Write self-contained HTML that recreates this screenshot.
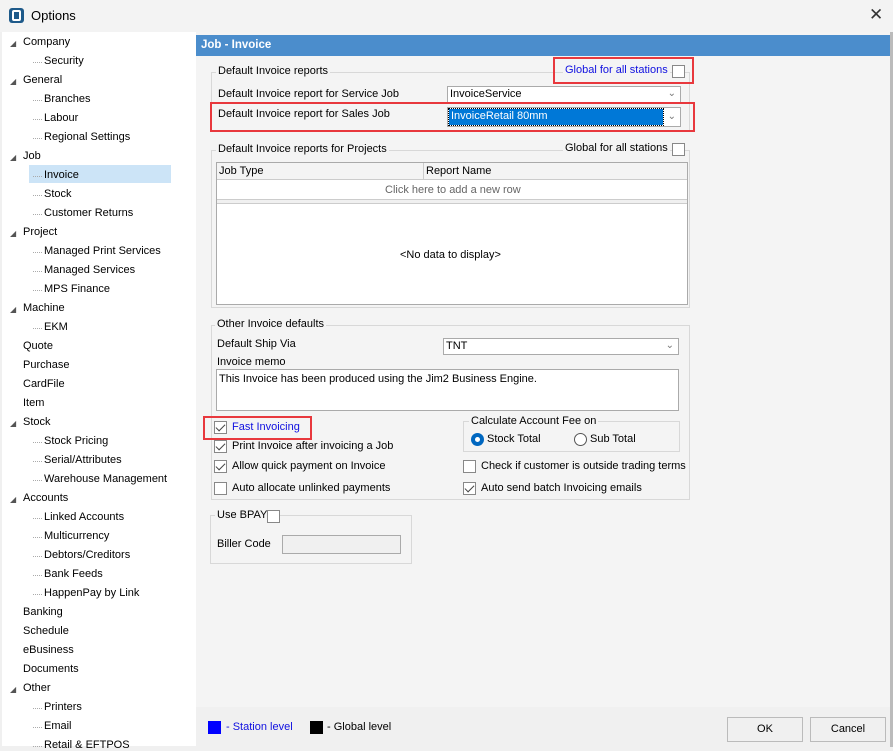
<!DOCTYPE html>
<html><head><style>
*{margin:0;padding:0;box-sizing:border-box}
body{width:893px;height:747px;background:#f0f0f0;font-family:"Liberation Sans",sans-serif;font-size:11px;color:#000;position:relative;overflow:hidden}
.a{position:absolute;white-space:nowrap}
.t{position:absolute;white-space:nowrap;font-size:11px}
.cb{position:absolute;width:13px;height:13px;border:1px solid #888;background:#fff}
.cb.k::after{content:"";position:absolute;left:3px;top:0px;width:4px;height:8px;border:solid #444;border-width:0 1.5px 1.5px 0;transform:rotate(45deg)}
.grp{position:absolute;border:1px solid #d8d8d8}
.lbl{position:absolute;background:#f4f4f4;padding:0 2px;white-space:nowrap;font-size:11px}
.sel{position:absolute;background:#fff;border:1px solid #aaa;font-size:11px;padding:1px 2px}
.dd{position:absolute;right:4px;top:1px;color:#777;font-size:10px}
.red{position:absolute;border:2px solid #e8383d}
</style></head><body>
<div class="a" style="left:0;top:0;width:893px;height:32px;background:#f3f3f3"></div>
<div class="a" style="left:9px;top:8px;width:15px;height:15px;background:#1e5a8a;border-radius:3px"></div>
<div class="a" style="left:12px;top:10px;width:9px;height:11px;border:2px solid #fff;border-radius:2px"></div>
<div class="a" style="left:31px;top:8px;font-size:13px">Options</div>
<div class="a" style="left:869px;top:5px;font-size:17px;color:#333">✕</div>
<div class="a" style="left:2px;top:32px;width:194px;height:714px;background:#fff"></div>
<div class="a" style="left:29px;top:165px;width:142px;height:18px;background:#cce4f7"></div>
<div id="tree"></div>
<div class="a" style="left:196px;top:32px;width:694px;height:675px;background:#f4f4f4"></div>
<div class="a" style="left:196px;top:35px;width:694px;height:21px;background:#4b8dcc;color:#fff;font-weight:bold;padding:4px 5px;font-size:11.5px">Job - Invoice</div>
<div class="grp" style="left:211px;top:72px;width:479px;height:60px"></div>
<div class="lbl" style="left:216px;top:65px">Default Invoice reports</div>
<div class="lbl" style="left:563px;top:64px;color:#1010e0">Global for all stations</div>
<div class="cb" style="left:672px;top:65px"></div>
<div class="red" style="left:553px;top:57px;width:141px;height:27px"></div>
<div class="t" style="left:218px;top:88px">Default Invoice report for Service Job</div>
<div class="sel" style="left:447px;top:86px;width:234px;height:17px">InvoiceService<span class="dd">⌄</span></div>
<div class="t" style="left:218px;top:108px">Default Invoice report for Sales Job</div>
<div class="sel" style="left:447px;top:107px;width:234px;height:20px;padding:1px"><div style="background:#0078d7;color:#fff;height:16px;width:214px;padding:1px 2px;outline:1px dotted #000">InvoiceRetail 80mm</div><span class="dd" style="top:3px">⌄</span></div>
<div class="red" style="left:210px;top:102px;width:485px;height:30px"></div>
<div class="grp" style="left:211px;top:150px;width:479px;height:158px"></div>
<div class="lbl" style="left:216px;top:143px">Default Invoice reports for Projects</div>
<div class="lbl" style="left:563px;top:142px">Global for all stations</div>
<div class="cb" style="left:672px;top:143px"></div>
<div class="a" style="left:216px;top:162px;width:472px;height:143px;background:#fff;border:1px solid #aaa"></div>
<div class="a" style="left:217px;top:163px;width:470px;height:17px;background:#f4f4f4;border-bottom:1px solid #ccc"></div>
<div class="a" style="left:423px;top:163px;width:1px;height:17px;background:#ccc"></div>
<div class="t" style="left:219px;top:165px">Job Type</div>
<div class="t" style="left:426px;top:165px">Report Name</div>
<div class="t" style="left:385px;top:184px;color:#666">Click here to add a new row</div>
<div class="a" style="left:217px;top:199px;width:470px;height:5px;background:#f0f0f0;border-top:1px solid #ccc;border-bottom:1px solid #ccc"></div>
<div class="t" style="left:400px;top:249px">&lt;No data to display&gt;</div>
<div class="grp" style="left:211px;top:325px;width:479px;height:175px"></div>
<div class="lbl" style="left:215px;top:318px">Other Invoice defaults</div>
<div class="t" style="left:217px;top:338px">Default Ship Via</div>
<div class="sel" style="left:443px;top:338px;width:236px;height:17px">TNT<span class="dd">⌄</span></div>
<div class="t" style="left:217px;top:356px">Invoice memo</div>
<div class="a" style="left:216px;top:369px;width:463px;height:42px;background:#fff;border:1px solid #aaa;padding:3px 2px;font-size:11px">This Invoice has been produced using the Jim2 Business Engine.</div>
<div class="cb k" style="left:214px;top:421px"></div><div class="t" style="left:232px;top:421px;color:#1010e0">Fast Invoicing</div>
<div class="red" style="left:203px;top:416px;width:109px;height:24px"></div>
<div class="cb k" style="left:214px;top:440px"></div><div class="t" style="left:232px;top:440px">Print Invoice after invoicing a Job</div>
<div class="cb k" style="left:214px;top:460px"></div><div class="t" style="left:232px;top:460px">Allow quick payment on Invoice</div>
<div class="cb" style="left:214px;top:482px"></div><div class="t" style="left:232px;top:482px">Auto allocate unlinked payments</div>
<div class="grp" style="left:463px;top:421px;width:217px;height:31px"></div>
<div class="lbl" style="left:469px;top:415px">Calculate Account Fee on</div>
<div class="a" style="left:471px;top:433px;width:13px;height:13px;border-radius:50%;background:#0067c0"></div>
<div class="a" style="left:475px;top:437px;width:5px;height:5px;border-radius:50%;background:#fff"></div>
<div class="t" style="left:487px;top:433px">Stock Total</div>
<div class="a" style="left:574px;top:433px;width:13px;height:13px;border-radius:50%;border:1px solid #555;background:#fff"></div>
<div class="t" style="left:590px;top:433px">Sub Total</div>
<div class="cb" style="left:463px;top:460px"></div><div class="t" style="left:481px;top:460px">Check if customer is outside trading terms</div>
<div class="cb k" style="left:463px;top:482px"></div><div class="t" style="left:481px;top:482px">Auto send batch Invoicing emails</div>
<div class="grp" style="left:210px;top:515px;width:202px;height:49px"></div>
<div class="lbl" style="left:215px;top:509px">Use BPAY</div>
<div class="cb" style="left:267px;top:510px"></div>
<div class="t" style="left:217px;top:538px">Biller Code</div>
<div class="a" style="left:282px;top:535px;width:119px;height:19px;border:1px solid #aaa;background:#f0f0f0"></div>
<div class="a" style="left:208px;top:721px;width:13px;height:13px;background:#0000ff"></div>
<div class="t" style="left:226px;top:721px;color:#1010e0">- Station level</div>
<div class="a" style="left:310px;top:721px;width:13px;height:13px;background:#000"></div>
<div class="t" style="left:327px;top:721px">- Global level</div>
<div class="a" style="left:727px;top:717px;width:76px;height:25px;border:1px solid #bbb;background:#f0f0f0;text-align:center;line-height:23px">OK</div>
<div class="a" style="left:810px;top:717px;width:76px;height:25px;border:1px solid #bbb;background:#f0f0f0;text-align:center;line-height:23px">Cancel</div>
<div class="a" style="left:890px;top:32px;width:3px;height:715px;background:#bbb"></div>
<script>
var items=[[0,"Company"],[1,"Security"],[0,"General"],[1,"Branches"],[1,"Labour"],[1,"Regional Settings"],[0,"Job"],[1,"Invoice"],[1,"Stock"],[1,"Customer Returns"],[0,"Project"],[1,"Managed Print Services"],[1,"Managed Services"],[1,"MPS Finance"],[0,"Machine"],[1,"EKM"],[0,"Quote"],[0,"Purchase"],[0,"CardFile"],[0,"Item"],[0,"Stock"],[1,"Stock Pricing"],[1,"Serial/Attributes"],[1,"Warehouse Management"],[0,"Accounts"],[1,"Linked Accounts"],[1,"Multicurrency"],[1,"Debtors/Creditors"],[1,"Bank Feeds"],[1,"HappenPay by Link"],[0,"Banking"],[0,"Schedule"],[0,"eBusiness"],[0,"Documents"],[0,"Other"],[1,"Printers"],[1,"Email"],[1,"Retail & EFTPOS"]];
var h="";
items.forEach(function(it,i){var y=36+i*19;var s=it[1].replace("&","&amp;");
if(it[0]==0){h+='<div class="t" style="left:23px;top:'+y+'px">'+s+'</div>';
if(i<37&&items[i+1][0]==1)h+='<div class="a" style="left:10px;top:'+(y+3)+'px;font-size:8px;color:#555">◢</div>';}
else h+='<div class="t" style="left:44px;top:'+y+'px">'+s+'</div><div class="a" style="left:33px;top:'+(y+7)+'px;width:9px;border-top:1px dotted #aaa"></div>';});
document.getElementById("tree").innerHTML=h;
</script>
</body></html>
